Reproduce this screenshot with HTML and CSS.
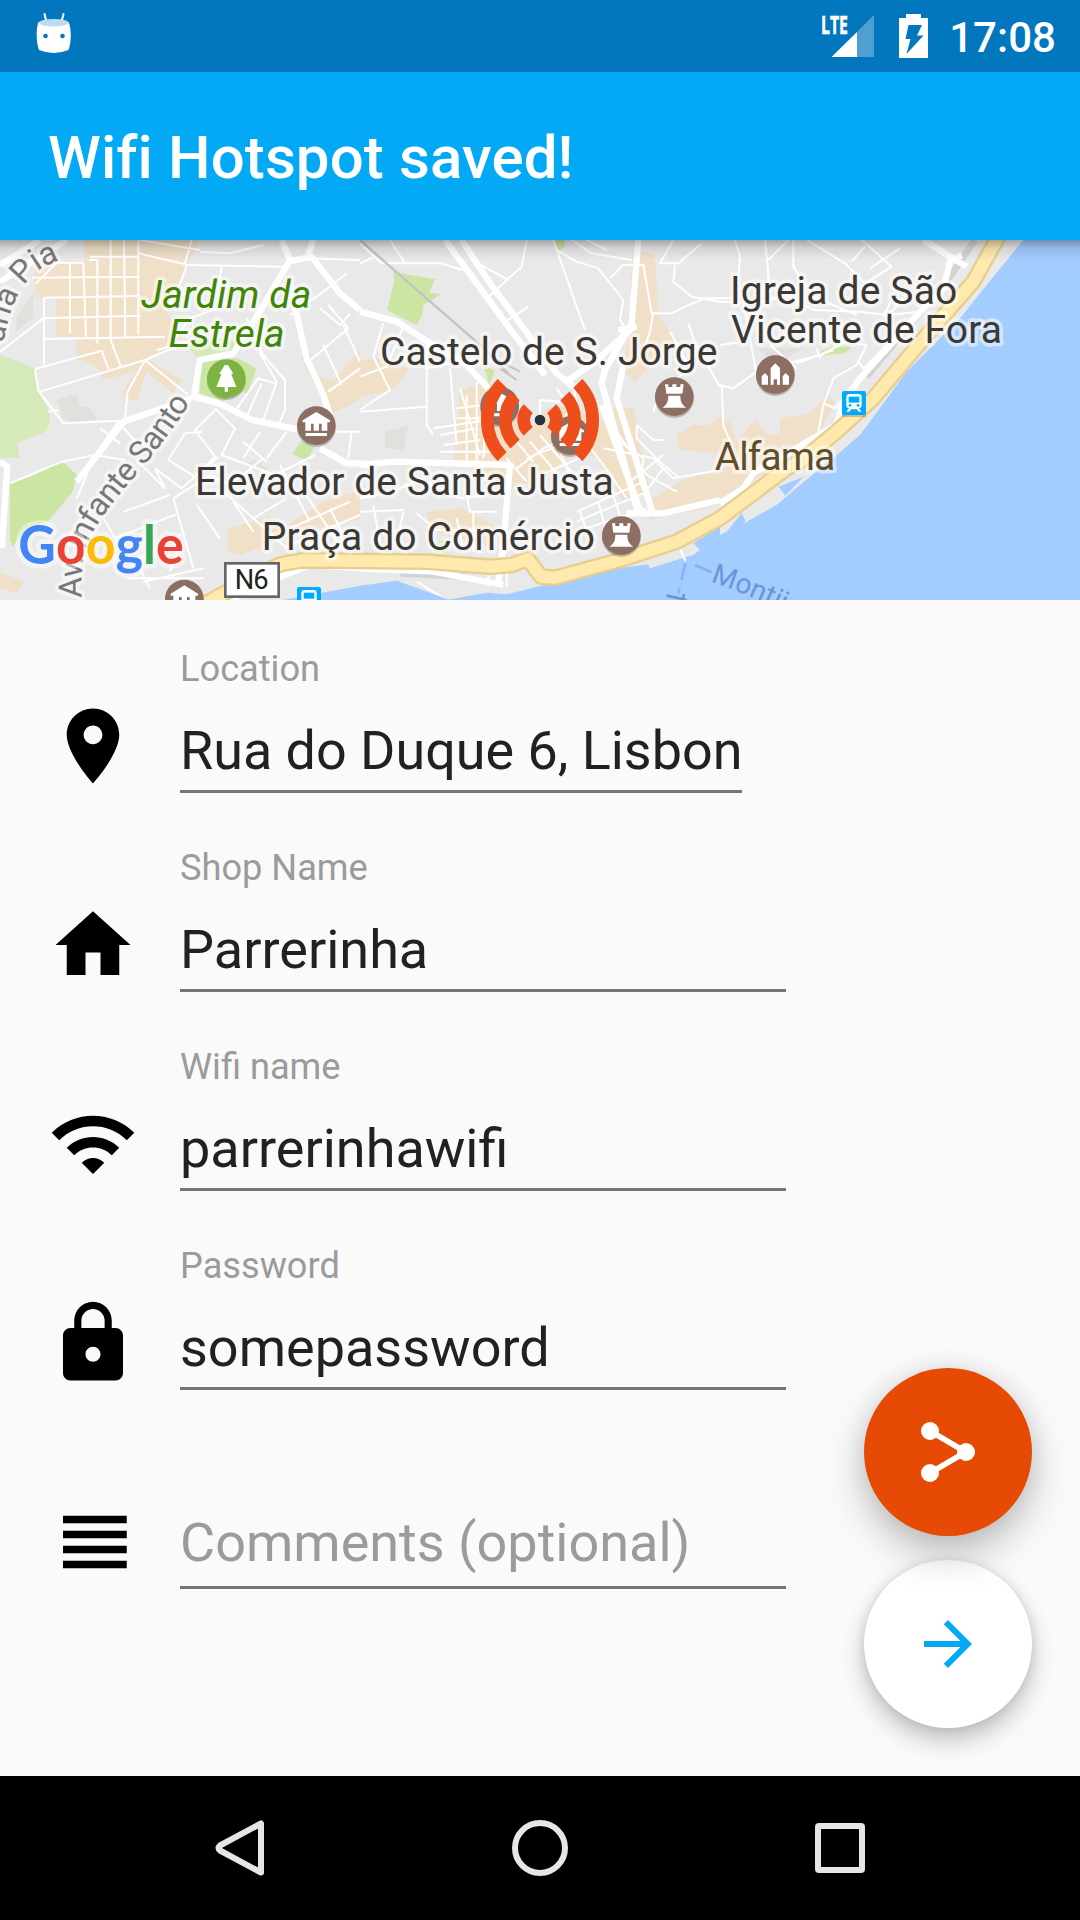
FILE: index.html
```html
<!DOCTYPE html>
<html lang="en">
<head>
<meta charset="utf-8">
<title>Wifi Hotspot saved!</title>
<link rel="stylesheet" href="styles.css">
</head>
<body>
<div class="screen">
  <header class="status-bar">
    <svg class="status-robot" width="36" height="42" viewBox="36 12 36 42">
      <path d="M44.500 14l2 8M63.500 14l-2 8" stroke="#fff" stroke-width="2" stroke-linecap="round"/>
      <path d="M38.500 22q15-4 30 0c3 6 3 20 0 28q-15 6-29.500 0c-3-8-3-22-.5-28z" fill="#fff"/>
      <ellipse cx="53.800" cy="22.800" rx="14.500" ry="3.800" fill="#bcdcee"/>
      <circle cx="45.500" cy="36" r="2.300" fill="#0277bd"/><circle cx="62.500" cy="36" r="2.300" fill="#0277bd"/>
    </svg>
    <div class="status-right">
      <svg class="signal" width="54" height="44" viewBox="821 14 54 44">
        <path d="M874 15v42h-17V32z" fill="#4f9fd2"/>
        <path d="M857 32v25h-25.500z" fill="#fff"/>
        <text class="lte" x="821" y="33.500" textLength="27" lengthAdjust="spacingAndGlyphs">LTE</text>
      </svg>
      <svg width="29" height="44" viewBox="899 14 29 44">
        <path d="M906 14h15v4h7v40h-29V18h7z" fill="#fff"/>
        <path d="M908.500 25h13.500l-5 10.500h6.500L906.500 54l4-15h-5z" fill="#0277bd"/>
      </svg>
      <span class="clock">17:08</span>
    </div>
  </header>
  <div class="app-bar"><h1>Wifi Hotspot saved!</h1></div>

  <svg class="map" viewBox="0 15 3240 1080">
    <defs>
      <path id="street-pia" d="M10 325C25 240 45 180 85 135S130 100 185 70"/>
      <path id="street-santo" d="M245 1088C240 960 260 900 345 795S470 655 565 512"/>
      <path id="ferry" d="M2131 1040Q2240 1075 2370 1140"/>
      <g id="pin"><circle cy="6" r="58" fill="#000" opacity=".22"/><circle r="58" fill="#8d6e63"/></g>
      <g id="museum"><use href="#pin"/><path d="M-41-16L0-41l41 25v6h-8v25H16V-6H8v21H-8V-6h-8v21h-17v-25h-8zM-32 22h64v9h-64z" fill="#fff"/></g>
      <g id="tower"><use href="#pin"/><path d="M-28-37h10v8h12v-8H6v8h12v-8h10L24-9h-48zM-18-3h36c0 18 5 28 18 36H-36c13-8 18-18 18-36z" fill="#fff"/></g>
      <g id="train"><rect x="-36" y="-30" width="72" height="72" rx="6" opacity=".2"/><rect x="-36" y="-36" width="72" height="72" rx="6" fill="#00aaff"/><path d="M-14-27h28q9 0 9 9v26q0 7-8 8l8 10h-9l-5-7h-18l-5 7h-9l8-10q-8-1-8-8v-26q0-9 9-9z" fill="#fff"/><path d="M-16-19h32v18h-32z" fill="#00aaff"/><circle cx="-12" cy="7" r="4" fill="#00aaff"/><circle cx="12" cy="7" r="4" fill="#00aaff"/></g>
      <linearGradient id="bar-shadow" x2="0" y2="1"><stop stop-opacity=".3"/><stop offset=".4" stop-opacity=".1"/><stop offset="1" stop-opacity="0"/></linearGradient>
    </defs>
    <rect y="15" width="3240" height="1080" fill="#e9e9e9"/>

    <g class="sand">
      <path d="M250 15h345L540 140 500 235l50 70-40 25-70 40 105 65-25 40-80-65-30 90-45-20 40-70-95 25-10-30-50-30h-20v-70h-60v-115l-65-5V80h150z"/>
      <path d="M900 365l30-10 20 70 50 10 80-90v150l-90 45zM685 880l120-35 50 30 115-75 110-35v90l-160 30-200 75-35-10zM0 1010l70 30-20 35-50-15z"/>
      <g transform="translate(1080)">
        <path d="M0 375l90-10 55 40-45 60-100 20zM820 40l65 20 10 180 65 100-70 30-65 70-45-40 40-140-10-100zM300 470l70-30 70 30 60 130 60-80 90-10 60 80 30-70h80l50 250-80 30-80-130-60-20-120 90-90 20-80-60-80-10zM200 830l110-10 100 55-30 60-170-50zM950 600l50-30h50l30-25v110l-120-10zM860 800l110-65 110-30v105l-210 45z"/>
      </g>
      <g transform="translate(2160)"><path d="M0 545l30 15 20 60 55-65 40 45 35-5v-45l90-15 50-55 25 20-45 90 30 20L90 740 0 790z"/></g>
    </g>

    <g class="parks">
      <path class="park-soft" d="M0 360l105 40 10 65 35 70v30l-15 25-85 35 8 43H0z"/>
      <path d="M30 745l75-25 80-42 47 43-15 50-70 85-70 30-40 50-8-20zM602 380l110-10 58 30-28 75-30-5-45 30-67-25zM905 615l37 22-20 40-45-20z"/>
      <path class="park-soft" d="M560 330l100-20 50 10v25l-120 20z"/>
      <path d="M1180 110l125 23-18 40 35 5-53 33-2 30-18 30-87-45 20-85zM1660 15h32l2 22-15 10zM1450 390l35 18-18 42z"/>
      <path d="M2460 350l35-15h60l-20 20-65 6zM2575 545l25-5v8z"/>
      <path class="park-soft" d="M1310 925l35-15v45h-35z"/>
    </g>
    <path class="block" d="M100 170v75l-50 45v-45zM170 495l60-18 8 35 32 5 20 37-70 13-30-15zM1155 590l70-18-15 75-55-10zM2270 340h140l-80 45zM730 690l35-15 35 25v15z"/>

    <g class="minor">
      <path d="M210 85v210M168 85l-60 60M250 85l8 220M292 75v250M332 15v300l30 80M372 15l4 290M415 15v285M160 83h90M268 75h24M270 65h145M95 128l320-3M130 188l290-5M132 250l290-8M135 312l360-7M132 190v200M0 350l130-100M105 402l200-55 20 55M120 470l315-95 130 105M435 375l-52 95-8 85M435 375l130-55M105 402l10 65 75 98 170-8M145 530l30-5M380 555l180-60"/>
      <path d="M560 90l-15 45-40 80M415 55l150 35 280 5 60-20M420 15l180 30M575 15l-20 70M600 50l90 5 100-25M665 95l-10 60M510 330l60-80 95-35M560 320L470 345M780 240v115l50 85-45 130M740 250l50 110 65 75v90l-20 45M700 535l75-105 50 15M740 545l45-100"/>
      <path d="M30 745l155-65 100-20 70-100M285 660L230 790M285 660l90 15M355 560l60 70M300 580l60 45M645 525l-60 60 60 80-60 60-80-50 50-80 50-5M465 700l80 60 110-95M465 700l30 60-80-80M520 790l60 210M520 790l110-70 60 30 100-80M370 830l140-50M310 850l60 100M345 910l190-75M410 975l140-80M590 810l70 100M420 1000l30 60M430 1040l180-40M540 930l-30 80M380 1030h230"/>
      <path d="M645 520l60 60-40 80 160 60 120-60M730 620l70 60M780 590l-50 80M860 590l-60 80M840 690l90 170M660 760l100 90 100-60M700 800l60 90M760 850l100 90M905 760l140 210M870 880l180-80M870 930l210-90M990 820l40 80"/>
      <path d="M870 240l80-55 90-70M960 220l60 50 30-35M985 210l60 70-120 100M1030 270l50 110M970 330l55 120M985 470l95-70M1010 590h70M1055 590l-10 80M930 70l150 5"/>
      <g transform="translate(1080)">
        <path d="M0 25l65 60h180l60 20M90 15l45 70M500 15l-15 80-110 100M345 80l100 55M435 260l70-45M580 15l95 270M590 45l60 35 65 20 75 95-10 60 20 30M635 15l60 40 120 20M680 15l60 30M750 130l40-40h60l25 145h60l40-20 60-25h85M0 85l45-20M945 90l-5 50 55 45 85 15M940 15l-40 70h55l70-60M880 230l-10 60-20 60M985 265l20 60 75 130M930 290l60 110-90 70-20 60"/>
        <path d="M70 265l-30 100 50 100-90 60M130 275l-50 120-80 30M200 320v250l20 30M200 400l150-30M0 530l200-15M270 400l20 230M220 580l200-30M240 600l110-20M250 630l110-15M300 460l60 200M320 480v200M350 440v240M380 500l-10 170M290 520l80-10M290 550h110M240 650h170"/>
        <path d="M0 790l100-20 80-40 120 60 80-10M0 830l130-5M40 810l20 120M130 830l-20 100M170 835l60 50h170M320 780l10 50h80M340 830v120M290 850l20 90"/>
        <path d="M470 620l50 60M440 670l60 70M470 700l80-60 110-50M510 620l110 130M540 600l120 140M570 580l60 140M500 670l150-60M520 730l160-70M600 500l-60-5v60M590 460l40 60-35 60M640 450l10 60M640 570l90 120 70 100M650 830l190-85M650 860l200-85M650 890l210-70M660 830l20 60M715 800l20 75M760 780l25 80"/>
        <path d="M730 640l150 30 60 60 140-25M830 570v40l80 80 50 40M830 570l50 45h30M770 590l90 130 90 50M780 620l70 50-10 80M810 740l100-80M850 780l60-80"/>
        <path d="M200 990l120 10M170 1040l90 55M385 1010v45M440 1000v55"/>
      </g>
      <g transform="translate(2160)">
        <path d="M45 15l15 50-10 125M135 15l15 160M145 75l60-60M220 15v80l60 90 130 55M260 15l115 70 60 60 80-50-95-85M395 80l40-45M450 100l90-60M0 200l110 5 90-25 80 45 140 5 80 10 100-10M70 200l40 220M0 330l70-10M110 410l-70 50-40-10M110 410l190-50 80-40 60 10-30 60-70 40-30 80-15 80M230 385l110-40M300 370l-10-30M5 450l5 120 20 50M310 505l35 15 20-25 30 20M415 380l15 20 70-70M150 330l80 70M520 185l-30 60M560 180l-50 55"/>
      </g>
    </g>

    <path class="rail-wide" d="M2925 15l-75 110-250 300M1200 1015l200 10"/>
    <g class="major">
      <path d="M0 140L200 15M0 90l120-75M845 15l25 60-100 170-70 110-100 20-18 110 75 20 100 50 190 40M575 490L370 560 230 740M865 80l70-15 85 110 60 50M870 150l50 220 50 110 20 60M960 640l80 45h60M0 680l22 15L5 940M940 15l-20 60"/>
      <g transform="translate(1080)">
        <path d="M0 230l110 30 140 90 60 30 75 80M305 15l85 130 90 120 110 150 50 40M255 15l190 260 110 145M835 15l-20 250-80 140-10 40 110 390M790 390l-20 100 110 350M0 690l100-10 350 10-20 240-15 110M725 510l120 330M620 440l85-60 110-100M775 285l55-10M0 1000l220 10 210 40M800 835h110l170-40"/>
      </g>
      <path d="M2160 805L2230 760 2260 715 2440 610 2510 570 2530 500 2580 430 2680 320 2770 220 2830 160 2850 80 2885 60M2770 15L2900 95M1090 1000l-160-10-100 40-140 65"/>
    </g>
    <path class="rail" d="M1080 15l355 310 90 90M1090 25l400 350 70 35M1500 400l50 35"/>

    <g class="water">
      <path d="M3070 15L2960 150 2880 250 2720 410 2580 600 2510 660 2400 750 2330 810 2240 860 2160 900 2080 960 2060 965 1950 1000 1945 988 1820 1005 1520 1078 1460 1073 1340 1095H3240V15z"/>
      <path d="M850 1095l230-43 110-15 160 58zM2336 755l75-30-55 57z"/>
      <path d="M2180 890l45-55 12 22-45 40z"/>
    </g>
    <path class="water" d="M2080 925l80-50v30l-60 40z"/>
    <path class="minor" d="M2035 930l22 48"/>
    <g>
      <path class="casing" d="M600 1115L700 1060 840 988 905 976 1280 980 1470 995 1535 990 1583 972 1623 1025 1665 1028 1860 975 2030 920 2160 850 2260 775 2360 700 2400 680 2510 590 2620 490 2780 300 2920 140 2995 5"/>
      <path class="highway" d="M600 1115L700 1060 840 988 905 976 1280 980 1470 995 1535 990 1583 972 1623 1025 1665 1028 1860 975 2030 920 2160 850 2260 775 2360 700 2400 680 2510 590 2620 490 2780 300 2920 140 2995 5"/>
    </g>
    <path class="ferry-line" d="M2056 985l-12 50M2038 1060l-2 14M2085 990l50 22"/>
    <path class="ferry-buoy" d="M2000 1082l60 13M2052 1078l-4 20"/>

    <use href="#museum" x="949" y="572"/>
    <use href="#museum" x="553" y="1092"/>
    <use href="#museum" x="1499" y="513"/>
    <use href="#museum" x="1711" y="602"/>
    <use href="#tower" x="2023" y="485"/>
    <use href="#tower" x="1864" y="902"/>
    <g transform="translate(2326 419)"><use href="#pin"/><path d="M-41 30V5l10-10 9 10v25zM22 30V5l9-10 10 10v25zM-14 30v-50l14-14 14 14v50H5V14h-10v16z" fill="#fff"/></g>
    <use href="#train" x="2562" y="504"/>
    <use href="#train" x="927" y="1092"/>
    <g transform="translate(679 431)"><circle cy="6" r="58" opacity=".22"/><circle r="58" fill="#7cb342"/><path d="M-5-41H5l16 26-6 2L30 25H5v14H-5V25h-25l15-38-6-2z" fill="#fff"/></g>

    <g class="street">
      <text><textPath href="#street-pia">aria Pia</textPath></text>
      <text textLength="690"><textPath href="#street-santo">Av. Infante Santo</textPath></text>
    </g>
    <text class="sea"><textPath href="#ferry">Montijo</textPath></text>

    <g class="marker" fill="none">
      <path d="M1733.600 445.200A158 158 0 0 1 1733.600 664.800M1694.800 482.800A104 104 0 0 1 1694.800 627.200M1655.300 521A49 49 0 0 1 1655.300 589M1506.400 445.200A158 158 0 0 0 1506.400 664.800M1545.200 482.800A104 104 0 0 0 1545.200 627.200M1584.700 521A49 49 0 0 0 1584.700 589"/>
      <circle cx="1620" cy="555" r="16"/>
    </g>

    <g class="place">
      <g class="garden"><text x="424" y="219" textLength="510">Jardim da</text><text x="506" y="336" textLength="348">Estrela</text></g>
      <text x="1140" y="390" textLength="1012">Castelo de S. Jorge</text>
      <text x="585" y="780" textLength="1256">Elevador de Santa Justa</text>
      <text x="785" y="944" textLength="1000">Praça do Comércio</text>
      <text x="2190" y="207" textLength="682">Igreja de São</text>
      <text x="2193" y="324" textLength="813">Vicente de Fora</text>
      <text class="district" x="2144" y="705" textLength="362">Alfama</text>
    </g>
    <rect x="676" y="985" width="160" height="100" fill="#fff" stroke="#666" stroke-width="8"/>
    <text class="route" x="704" y="1063" textLength="102">N6</text>
    <text class="google" x="55" y="987" textLength="496" lengthAdjust="spacingAndGlyphs"><tspan fill="#4285f4">G</tspan><tspan fill="#ea4335">o</tspan><tspan fill="#fbbc05">o</tspan><tspan fill="#4285f4">g</tspan><tspan fill="#34a853">l</tspan><tspan fill="#ea4335">e</tspan></text>
    <rect y="15" width="3240" height="60" fill="url(#bar-shadow)"/>
  </svg>

  <main class="content">
    <div class="fields">
      <div class="row">
        <svg class="icon" viewBox="0 0 24 24"><path d="M12 2C8.130 2 5 5.130 5 9c0 5.250 7 13 7 13s7-7.750 7-13c0-3.870-3.130-7-7-7zm0 9.500c-1.380 0-2.500-1.120-2.500-2.500s1.120-2.500 2.500-2.500 2.500 1.120 2.500 2.500-1.120 2.500-2.500 2.500z"/></svg>
        <div class="field field-short"><div class="label">Location</div><div class="value value-fit">Rua do Duque 6, Lisbon</div></div>
      </div>
      <div class="row">
        <svg class="icon" viewBox="0 0 24 24"><path d="M10 20v-6h4v6h5v-8h3L12 3 2 12h3v8z"/></svg>
        <div class="field"><div class="label">Shop Name</div><div class="value">Parrerinha</div></div>
      </div>
      <div class="row">
        <svg class="icon" viewBox="0 0 24 24"><path d="M1 9l2 2c4.970-4.970 13.030-4.970 18 0l2-2C16.930 2.930 7.080 2.930 1 9zm8 8l3 3 3-3c-1.650-1.660-4.340-1.660-6 0zm-4-4l2 2c2.760-2.760 7.240-2.760 10 0l2-2C15.140 9.140 8.870 9.140 5 13z"/></svg>
        <div class="field"><div class="label">Wifi name</div><div class="value">parrerinhawifi</div></div>
      </div>
      <div class="row">
        <svg class="icon" viewBox="0 0 24 24"><path d="M18 8h-1V6c0-2.760-2.240-5-5-5S7 3.240 7 6v2H6c-1.100 0-2 .9-2 2v10c0 1.100.9 2 2 2h12c1.100 0 2-.9 2-2V10c0-1.100-.9-2-2-2zm-6 9c-1.100 0-2-.9-2-2s.9-2 2-2 2 .9 2 2-.9 2-2 2zm3.100-9H8.900V6c0-1.710 1.390-3.100 3.100-3.100 1.710 0 3.100 1.390 3.100 3.100v2z"/></svg>
        <div class="field"><div class="label">Password</div><div class="value">somepassword</div></div>
      </div>
      <div class="row">
        <svg class="icon" viewBox="0 0 24 24"><path d="M4 15h17v-2H4v2zm0 4h17v-2H4v2zm0-8h17V9H4v2zm0-6v2h17V5H4z"/></svg>
        <div class="field"><div class="value hint">Comments (optional)</div></div>
      </div>
    </div>
    <div class="fabs">
      <div class="fab fab-next"><svg width="72" height="72" viewBox="0 0 24 24"><path fill="#03a9f4" d="M12 4l-1.410 1.410L16.170 11H4v2h12.170l-5.580 5.590L12 20l8-8z"/></svg></div>
      <div class="fab fab-share"><svg width="72" height="72" viewBox="0 0 72 72"><path d="M18 15l36 21-36 21" fill="none" stroke="#fff" stroke-width="5.500"/><g fill="#fff"><circle cx="18" cy="15" r="9"/><circle cx="54" cy="36" r="9"/><circle cx="18" cy="57" r="9"/></g></svg></div>
    </div>
  </main>

  <nav class="nav-bar">
    <svg width="60" height="60" viewBox="210 1818 60 60"><path d="M261 1823.500v49l-41-22q-3-2.500 0-5z"/></svg>
    <svg width="60" height="60" viewBox="510 1818 60 60"><circle cx="540" cy="1848" r="25"/></svg>
    <svg width="60" height="60" viewBox="810 1818 60 60"><rect x="818" y="1826" width="44" height="44" rx="1"/></svg>
  </nav>
</div>
</body>
</html>
```
FILE: styles.css
```css
* { box-sizing: border-box; }
body { margin: 0; background: #fafafa; font-family: Roboto, "Noto Sans", sans-serif; }
svg { display: block; }
.screen { width: 1080px; height: 1920px; display: flex; flex-direction: column; overflow: hidden; }

.status-bar { height: 72px; flex: none; background: #0277bd; display: flex; justify-content: space-between; padding: 0 24px 0 36px; }
.status-robot { margin-top: 12px; }
.status-right { display: flex; padding-top: 14px; gap: 24px; }
.signal { overflow: visible; }
.lte { font: 700 25px "Open Sans", Roboto, sans-serif; fill: #fff; stroke: #fff; stroke-width: .5px; }
.clock { color: #fff; font-size: 42px; font-weight: 500; line-height: 48px; margin-left: -3px; letter-spacing: .05px; }

.app-bar { height: 168px; flex: none; background: #03a9f4; padding: 4px 0 0 48px; display: flex; align-items: center; }
.app-bar h1 { margin: 0; color: #fff; font-size: 60px; line-height: 70px; font-weight: 500; letter-spacing: .1px; font-variant-ligatures: common-ligatures; }

.map { width: 1080px; height: 360px; flex: none; }
.sand { fill: #f0e0c8; }
.parks { fill: #cbe6a3; }
.park-soft { fill: #d5e9b9; }
.block { fill: #e0e1dc; }
.minor { fill: none; stroke: #fff; stroke-width: 6; stroke-linejoin: round; }
.major { fill: none; stroke: #fff; stroke-width: 19; stroke-linejoin: round; }
.rail { fill: none; stroke: #c4c4c4; stroke-width: 6; }
.rail-wide { fill: none; stroke: #d3d3d3; stroke-width: 20; }
.water { fill: #a3ccff; }
.casing { fill: none; stroke: #e6cf8e; stroke-width: 50; stroke-linejoin: round; }
.highway { fill: none; stroke: #ffe9ad; stroke-width: 36; stroke-linejoin: round; }
.ferry-line { fill: none; stroke: #86b2fa; stroke-width: 8; }
.ferry-buoy { fill: none; stroke: #6c94d8; stroke-width: 8; }
.place text, .street text { paint-order: stroke; stroke: rgba(255, 255, 255, .5); stroke-width: 22px; stroke-linejoin: round; }
.place { font-size: 117px; fill: #3c3833; }
.garden { fill: #3f8505; font-style: italic; }
.district { fill: #5f4e28; }
.street { font-size: 96px; fill: #777; }
.sea { font-size: 84px; fill: #6c94d8; }
.route { font-size: 82px; fill: #222; }
.google { font: 700 160px Lato, sans-serif; paint-order: stroke; stroke: rgba(255, 255, 255, .45); stroke-width: 28px; stroke-linejoin: round; }
.marker path { stroke: #ee4e1c; stroke-width: 38; }
.marker circle { fill: #263238; }

.content { flex: 1; display: flex; justify-content: space-between; }
.fields { padding: 48px 0 0 48px; display: flex; flex-direction: column; gap: 54px; }
.row { height: 145px; display: flex; gap: 42px; }
.icon { width: 90px; height: 90px; margin-top: 53px; flex: none; }
.field { width: 606px; display: flex; flex-direction: column; justify-content: flex-end; }
.field-short { width: 562px; }
.label { font-size: 36.200px; line-height: 42px; color: #9b9b9b; margin-bottom: 29px; }
.value { font-size: 54px; line-height: 64px; color: #212121; padding-bottom: 7px; border-bottom: 3px solid #757575; white-space: nowrap; }
.value-fit { font-size: 53.900px; }
.value.hint { color: #9b9b9b; padding-bottom: 11px; }

.fabs { display: flex; flex-direction: column-reverse; gap: 24px; padding: 0 48px 48px 0; }
.fab { width: 168px; height: 168px; border-radius: 50%; display: flex; align-items: center; justify-content: center; }
.fab-share { background: #e64a04; box-shadow: 0 18px 40px rgba(0, 0, 0, .24), 0 0 24px rgba(0, 0, 0, .08); z-index: 1; }
.fab-next { background: #fff; box-shadow: 0 12px 24px rgba(0, 0, 0, .24), 0 0 10px rgba(0, 0, 0, .1); }

.nav-bar { height: 144px; flex: none; background: #000; display: flex; justify-content: center; align-items: center; gap: 240px; fill: none; stroke: #e6e6e6; stroke-width: 6; stroke-linejoin: round; }
```
